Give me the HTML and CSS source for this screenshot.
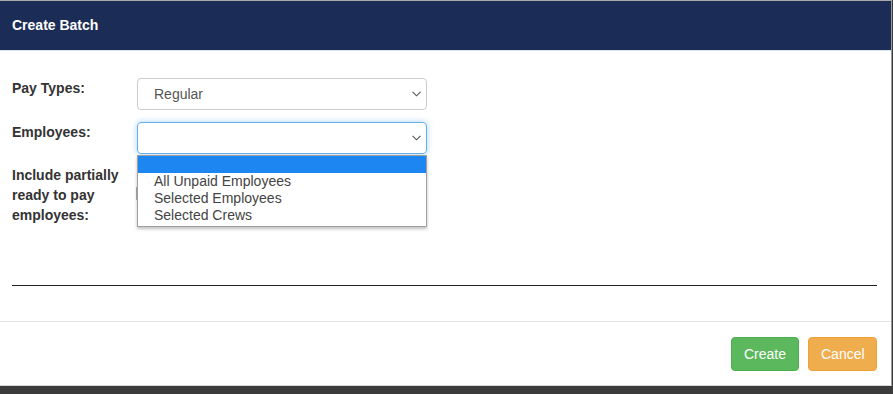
FILE: index.html
```html
<!DOCTYPE html>
<html lang="en">
<head>
    <meta charset="UTF-8">
    <meta name="viewport" content="width=device-width, initial-scale=1.0">
    <link rel="stylesheet" href="styles.css">
    <title>Create Batch</title>
</head>
<body>
    <div class="modal">
        <div class="modal-header">Create Batch</div>
        <div class="modal-body">
            <div class="form-row">
                <label class="form-label">Pay Types:</label>
                <div class="select">
                    <span>Regular</span>
                    <svg class="chevron" width="9" height="6" viewBox="0 0 9 6"><path d="M0.5 0.8 L4.5 4.8 L8.5 0.8" fill="none" stroke="#555" stroke-width="1.1"/></svg>
                </div>
            </div>
            <div class="form-row">
                <label class="form-label">Employees:</label>
                <div class="select focused">
                    <span></span>
                    <svg class="chevron" width="9" height="6" viewBox="0 0 9 6"><path d="M0.5 0.8 L4.5 4.8 L8.5 0.8" fill="none" stroke="#555" stroke-width="1.1"/></svg>
                    <!-- open dropdown list -->
                    <ul class="dropdown">
                        <li class="active">&nbsp;</li>
                        <li>All Unpaid Employees</li>
                        <li>Selected Employees</li>
                        <li>Selected Crews</li>
                    </ul>
                </div>
            </div>
            <div class="form-row row-check">
                <label class="form-label">Include partially ready to pay employees:</label>
                <span class="check"></span>
            </div>
            <hr class="divider">
        </div>
        <div class="modal-footer">
            <button class="btn btn-create">Create</button>
            <button class="btn btn-cancel">Cancel</button>
        </div>
    </div>
</body>
</html>
```

FILE: styles.css
```css
body {
    margin: 0;
    background-color: #3b3b3b;
    font-family: "Liberation Sans", Arial, sans-serif;
    height: 394px;
    overflow: hidden;
}

.modal {
    width: 891px;
    background-color: #fff;
    border-top: 1px solid #a9a9a9;
    border-right: 1px solid #9a9a9a;
    border-bottom: 1px solid #d8d8d8;
}

.modal-header {
    height: 49px;
    background-color: #1b2c56;
    border-bottom: 1px solid #dde4ec;
    color: #fff;
    font-size: 14px;
    font-weight: bold;
    padding-left: 12px;
    line-height: 49px;
}

.modal-body {
    height: 270px;
    box-sizing: border-box;
    padding: 27px 14px 0 12px;
    display: flex;
    flex-direction: column;
}

.form-row {
    display: flex;
    align-items: flex-start;
    margin-bottom: 12px;
}

.form-label {
    width: 125px;
    font-size: 14px;
    font-weight: bold;
    color: #333;
    line-height: 20px;
    padding-top: 0;
}

.select {
    position: relative;
    width: 290px;
    height: 32px;
    box-sizing: border-box;
    border: 1px solid #ccc;
    border-radius: 4px;
    display: flex;
    align-items: center;
    padding: 0 5px 0 16px;
    font-size: 14px;
    color: #555;
}

.select span {
    flex: 1;
}

.select.focused {
    border-color: #66afe9;
    box-shadow: 0 0 6px rgba(102, 175, 233, 0.55);
}

.dropdown {
    position: absolute;
    top: 32px;
    left: -1px;
    width: 290px;
    box-sizing: border-box;
    margin: 0;
    padding: 0 0 2px 0;
    list-style: none;
    background-color: #fff;
    border: 1px solid #a0a0a0;
    box-shadow: 0 2px 3px rgba(0, 0, 0, 0.25);
    z-index: 2;
}

.dropdown li {
    height: 17px;
    line-height: 17px;
    padding-left: 16px;
    font-size: 14px;
    color: #444;
}

.dropdown li.active {
    background-color: #1e86f0;
}

.row-check {
    margin-top: -1px;
}

.check {
    width: 13px;
    height: 13px;
    border: 1px solid #aaa;
    border-radius: 2px;
    margin-top: 21px;
    margin-left: -1px;
}

.divider {
    margin: auto 0 35px 0;
    border: 0;
    border-top: 1px solid #222;
}

.modal-footer {
    border-top: 1px solid #e5e5e5;
    padding: 15px 14px 14px 0;
    display: flex;
    justify-content: flex-end;
    gap: 9px;
}

.btn {
    height: 34px;
    padding: 0 12px;
    font-family: inherit;
    font-size: 14px;
    color: #fff;
    border-radius: 4px;
    border: 1px solid transparent;
}

.btn-create {
    width: 68px;
    background-color: #5cb85c;
    border-color: #4cae4c;
}

.btn-cancel {
    width: 69px;
    background-color: #f0ad4e;
    border-color: #eea236;
}
```
